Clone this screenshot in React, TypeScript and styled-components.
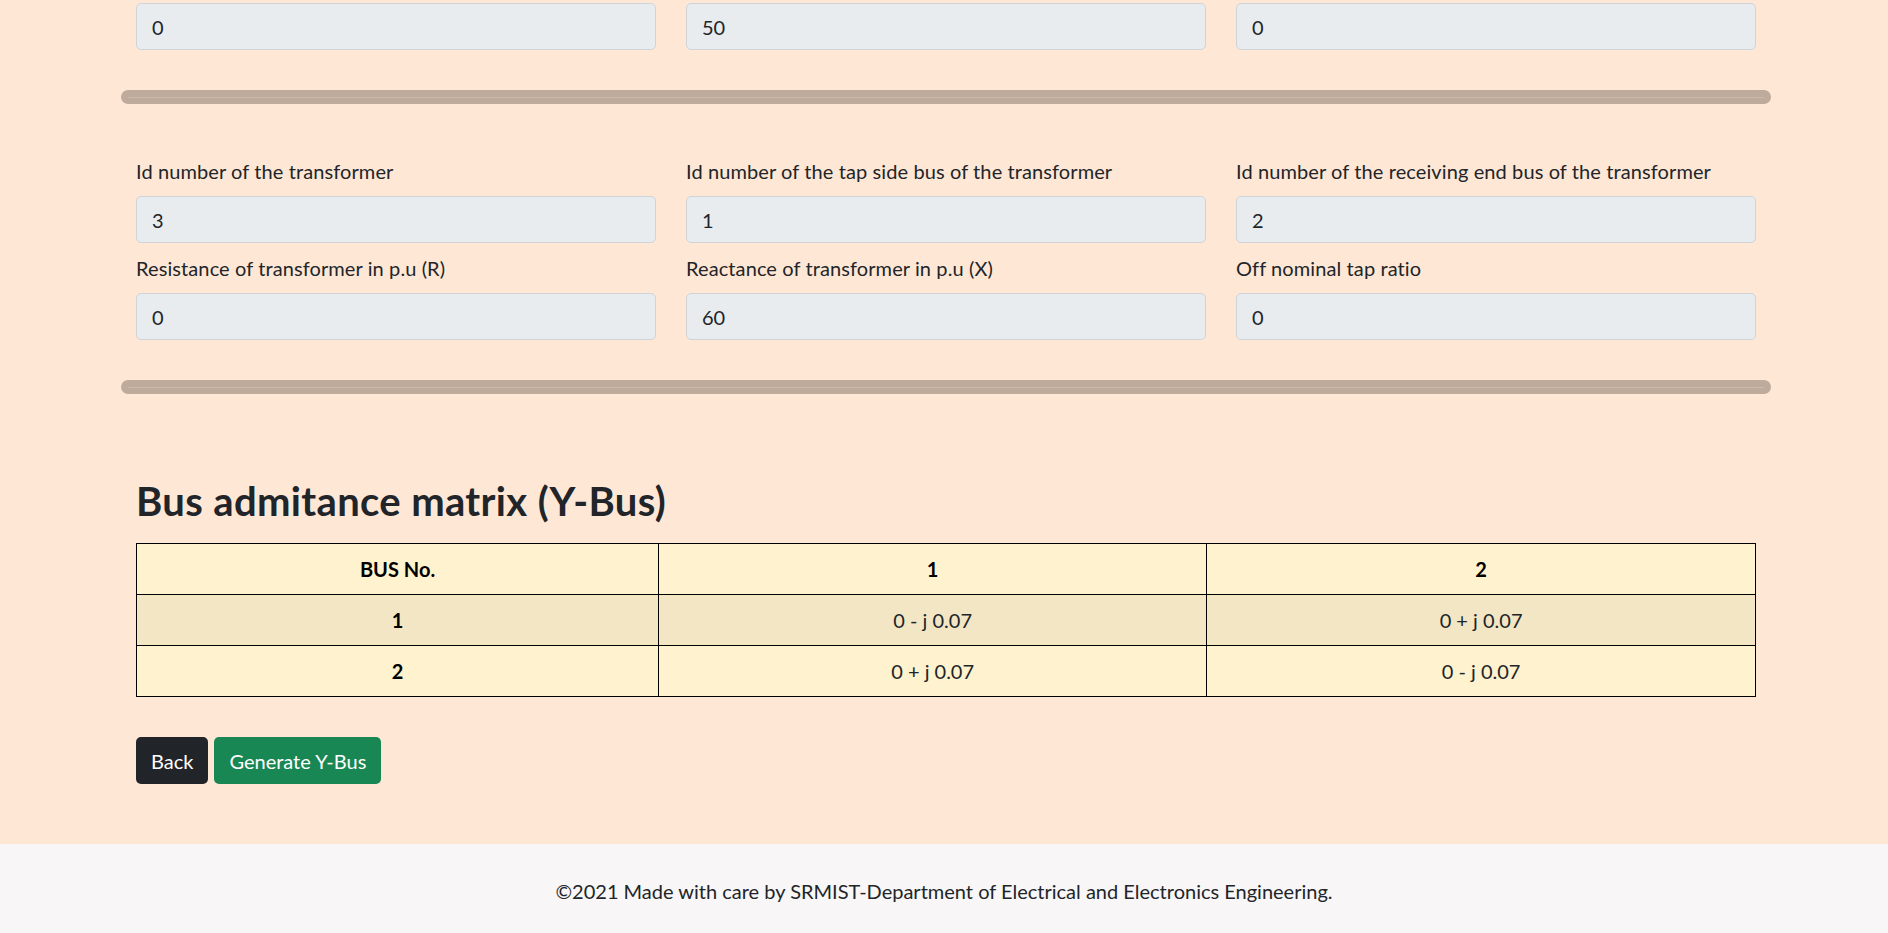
import styled, { createGlobalStyle } from 'styled-components'

const GlobalStyle = createGlobalStyle`
  html, body {
    margin: 0;
    padding: 0;
    overflow: hidden;
  }
  body {
    background-color: #ffe7d6;
    color: #212529;
    font-family: 'Lato', 'Liberation Sans', sans-serif;
    font-size: 20px;
    line-height: 1.5;
  }
  * {
    box-sizing: border-box;
  }
`

const Main = styled.main`
  background-color: #ffe7d6;
`

const Container = styled.div`
  width: 1650px;
  margin-left: calc(50% - 823px);
  padding: 3px 15px 60px;
`

const FieldGrid = styled.div`
  display: grid;
  grid-template-columns: repeat(3, 1fr);
  column-gap: 30px;
  row-gap: 10px;
`

const Field = styled.div`
  display: flex;
  flex-direction: column;
`

const Label = styled.label`
  line-height: 30px;
  margin-bottom: 10px;
  letter-spacing: 0.1px;
`

const Input = styled.input`
  height: 47px;
  padding: 7.5px 15px;
  border: 1px solid #ced4da;
  border-radius: 5px;
  background-color: #e9ecef;
  color: #212529;
  font-family: inherit;
  font-size: 20px;
  &:focus-visible {
    outline: none;
  }
`

const Divider = styled.div<{ $after: number }>`
  position: relative;
  height: 14px;
  margin: 40px -15px ${p => p.$after}px;
  border-radius: 7px;
  background-color: #bfab9c;
  &::after {
    content: '';
    position: absolute;
    left: 7px;
    right: 7px;
    top: 7px;
    height: 1px;
    background-color: #cbb9aa;
  }
`

const Heading = styled.h2`
  margin: 0 0 18px;
  font-size: 40px;
  font-weight: 700;
  line-height: 48px;
  letter-spacing: 0.35px;
`

const Table = styled.table`
  width: 100%;
  border-collapse: collapse;
  table-layout: fixed;
  text-align: center;
`

const Row = styled.tr<{ $striped?: boolean }>`
  background-color: ${p => (p.$striped ? '#f2e6c4' : '#fff2ce')};
`

const HeadCell = styled.th`
  border: 1px solid #000;
  padding: 10px;
  line-height: 30px;
  font-weight: 700;
  color: #000;
`

const Cell = styled.td`
  border: 1px solid #000;
  padding: 10px;
  line-height: 30px;
  color: #212529;
`

const Actions = styled.div`
  display: flex;
  gap: 6px;
  margin-top: 40px;
`

const Button = styled.button<{ $variant: 'dark' | 'success' }>`
  height: 47px;
  padding: 7.5px 15px;
  border: none;
  border-radius: 5px;
  background-color: ${p => (p.$variant === 'dark' ? '#212529' : '#198754')};
  color: #fff;
  font-family: inherit;
  font-size: 20px;
  line-height: 30px;
`

const Footer = styled.footer`
  height: 89px;
  padding-top: 32px;
  background-color: #f8f6f6;
  text-align: center;
  line-height: 30px;
  color: #212529;
`

const topValues = ['0', '50', '0']

const fields = [
  { label: 'Id number of the transformer', value: '3' },
  { label: 'Id number of the tap side bus of the transformer', value: '1' },
  { label: 'Id number of the receiving end bus of the transformer', value: '2' },
  { label: 'Resistance of transformer in p.u (R)', value: '0' },
  { label: 'Reactance of transformer in p.u (X)', value: '60' },
  { label: 'Off nominal tap ratio', value: '0' },
]

const ybus = [
  ['0 - j 0.07', '0 + j 0.07'],
  ['0 + j 0.07', '0 - j 0.07'],
]

export default function App() {
  return (
    <>
      <GlobalStyle />
      <Main>
        <Container>
          <FieldGrid>
            {topValues.map((v, i) => (
              <Input key={i} defaultValue={v} readOnly />
            ))}
          </FieldGrid>
          <Divider $after={52} />
          <FieldGrid>
            {fields.map(f => (
              <Field key={f.label}>
                <Label>{f.label}</Label>
                <Input defaultValue={f.value} readOnly />
              </Field>
            ))}
          </FieldGrid>
          <Divider $after={83} />
          <Heading>Bus admitance matrix (Y-Bus)</Heading>
          <Table>
            <colgroup>
              <col style={{ width: '32.25%' }} />
              <col style={{ width: '33.85%' }} />
              <col style={{ width: '33.9%' }} />
            </colgroup>
            <thead>
              <Row>
                <HeadCell>BUS No.</HeadCell>
                <HeadCell>1</HeadCell>
                <HeadCell>2</HeadCell>
              </Row>
            </thead>
            <tbody>
              {ybus.map((r, i) => (
                <Row key={i} $striped={i % 2 === 0}>
                  <HeadCell scope="row">{i + 1}</HeadCell>
                  {r.map((c, j) => (
                    <Cell key={j}>{c}</Cell>
                  ))}
                </Row>
              ))}
            </tbody>
          </Table>
          <Actions>
            <Button $variant="dark">Back</Button>
            <Button $variant="success">Generate Y-Bus</Button>
          </Actions>
        </Container>
      </Main>
      <Footer>©2021 Made with care by SRMIST-Department of Electrical and Electronics Engineering.</Footer>
    </>
  )
}
